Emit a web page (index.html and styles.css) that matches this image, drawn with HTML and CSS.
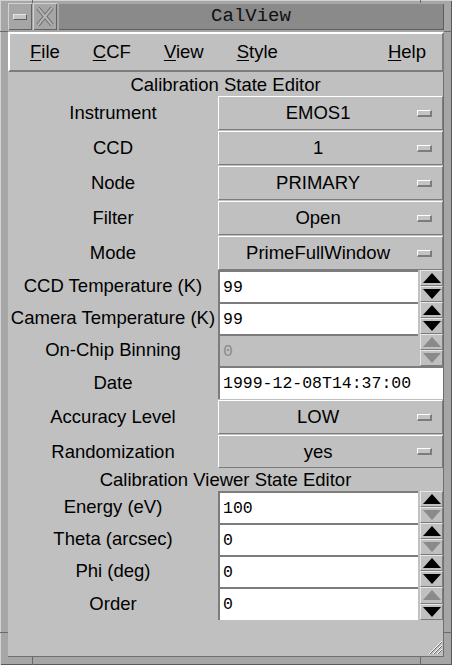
FILE: index.html
```html
<!DOCTYPE html>
<html>
<head>
<meta charset="utf-8">
<title>CalView</title>
<link rel="stylesheet" href="styles.css">
</head>
<body>
<div class="win">
  <span class="notch nt-l"></span><span class="notch nt-r"></span>
  <span class="notch nl-t"></span><span class="notch nr-t"></span>
  <span class="notch nl-b"></span><span class="notch nr-b"></span>
  <span class="notch nb-l"></span><span class="notch nb-r"></span>
  <div class="titlebar">
    <div class="tbtn"><span class="minbar"></span></div>
    <div class="tbtn">
      <svg width="24" height="27" viewBox="0 0 24 27">
        <path d="M5 5 L19 22 M19 5 L5 22" stroke="#6e6e6e" stroke-width="4" fill="none"/>
        <path d="M5 5 L19 22 M19 5 L5 22" stroke="#b4b4b4" stroke-width="2" fill="none"/>
      </svg>
    </div>
    <div class="title">CalView</div>
  </div>
  <div class="client">
    <div class="menubar">
      <span class="mi"><u>F</u>ile</span>
      <span class="mi"><u>C</u>CF</span>
      <span class="mi"><u>V</u>iew</span>
      <span class="mi"><u>S</u>tyle</span>
      <span class="mi help"><u>H</u>elp</span>
    </div>
    <div class="form">
      <div class="hdr hdr1">Calibration State Editor</div>

      <div class="row h35"><div class="lbl">Instrument</div><div class="opt"><span class="otext">EMOS1</span><span class="ind"></span></div></div>
      <div class="row h35"><div class="lbl">CCD</div><div class="opt"><span class="otext">1</span><span class="ind"></span></div></div>
      <div class="row h35"><div class="lbl">Node</div><div class="opt"><span class="otext">PRIMARY</span><span class="ind"></span></div></div>
      <div class="row h35"><div class="lbl">Filter</div><div class="opt"><span class="otext">Open</span><span class="ind"></span></div></div>
      <div class="row h34"><div class="lbl">Mode</div><div class="opt"><span class="otext">PrimeFullWindow</span><span class="ind"></span></div></div>

      <div class="row h32"><div class="lbl">CCD Temperature (K)</div><div class="field">99</div>
        <div class="spin"><span class="arr"><svg class="tri" viewBox="0 0 18 10"><path d="M0 10 L9 0 L18 10 Z"/></svg></span><span class="arr"><svg class="tri" viewBox="0 0 18 10"><path d="M0 0 L9 10 L18 0 Z"/></svg></span></div></div>
      <div class="row h32"><div class="lbl">Camera Temperature (K)</div><div class="field">99</div>
        <div class="spin"><span class="arr"><svg class="tri" viewBox="0 0 18 10"><path d="M0 10 L9 0 L18 10 Z"/></svg></span><span class="arr"><svg class="tri" viewBox="0 0 18 10"><path d="M0 0 L9 10 L18 0 Z"/></svg></span></div></div>
      <div class="row h32"><div class="lbl">On-Chip Binning</div><div class="field off">0</div>
        <div class="spin"><span class="arr off"><svg class="tri" viewBox="0 0 18 10"><path d="M0 10 L9 0 L18 10 Z"/></svg></span><span class="arr off"><svg class="tri" viewBox="0 0 18 10"><path d="M0 0 L9 10 L18 0 Z"/></svg></span></div></div>
      <div class="row h34"><div class="lbl">Date</div><div class="field wide">1999-12-08T14:37:00</div></div>

      <div class="row h35"><div class="lbl">Accuracy Level</div><div class="opt"><span class="otext">LOW</span><span class="ind"></span></div></div>
      <div class="row h33"><div class="lbl">Randomization</div><div class="opt"><span class="otext">yes</span><span class="ind"></span></div></div>

      <div class="hdr hdr2">Calibration Viewer State Editor</div>

      <div class="row h32"><div class="lbl">Energy (eV)</div><div class="field">100</div>
        <div class="spin"><span class="arr"><svg class="tri" viewBox="0 0 18 10"><path d="M0 10 L9 0 L18 10 Z"/></svg></span><span class="arr off"><svg class="tri" viewBox="0 0 18 10"><path d="M0 0 L9 10 L18 0 Z"/></svg></span></div></div>
      <div class="row h32"><div class="lbl">Theta (arcsec)</div><div class="field">0</div>
        <div class="spin"><span class="arr"><svg class="tri" viewBox="0 0 18 10"><path d="M0 10 L9 0 L18 10 Z"/></svg></span><span class="arr off"><svg class="tri" viewBox="0 0 18 10"><path d="M0 0 L9 10 L18 0 Z"/></svg></span></div></div>
      <div class="row h32"><div class="lbl">Phi (deg)</div><div class="field">0</div>
        <div class="spin"><span class="arr"><svg class="tri" viewBox="0 0 18 10"><path d="M0 10 L9 0 L18 10 Z"/></svg></span><span class="arr"><svg class="tri" viewBox="0 0 18 10"><path d="M0 0 L9 10 L18 0 Z"/></svg></span></div></div>
      <div class="row h33"><div class="lbl">Order</div><div class="field">0</div>
        <div class="spin"><span class="arr off"><svg class="tri" viewBox="0 0 18 10"><path d="M0 10 L9 0 L18 10 Z"/></svg></span><span class="arr"><svg class="tri" viewBox="0 0 18 10"><path d="M0 0 L9 10 L18 0 Z"/></svg></span></div></div>

      <div class="filler"></div>
      <svg class="grip" width="14" height="14" viewBox="0 0 14 14">
        <path d="M14 1 L1 14 M14 5 L5 14 M14 9 L9 14" stroke="#ffffff" stroke-width="1" fill="none"/>
        <path d="M14 2 L2 14 M14 6 L6 14 M14 10 L10 14" stroke="#707070" stroke-width="1" fill="none"/>
      </svg>
    </div>
  </div>
</div>
</body>
</html>
```

FILE: styles.css
```css
* { box-sizing: border-box; }
html, body { margin: 0; padding: 0; }
body {
  width: 452px;
  height: 665px;
  overflow: hidden;
  background: #a6a6a6;
  font-family: "Liberation Sans", Arial, sans-serif;
  color: #000;
}
.win {
  position: relative;
  width: 452px;
  height: 665px;
  background: #a6a6a6;
  padding: 3px 8px 8px 8px;
  display: flex;
  flex-direction: column;
  box-shadow: inset 1px 1px 0 #d2d2d2, inset -1px -1px 0 #5a5a5a;
}
.notch { position: absolute; background: #6a6a6a; }
.nt-l { left: 32px; top: 0; width: 1px; height: 3px; }
.nt-r { left: 420px; top: 0; width: 1px; height: 3px; }
.nb-l { left: 32px; bottom: 0; width: 1px; height: 8px; }
.nb-r { left: 420px; bottom: 0; width: 1px; height: 8px; }
.nl-t { left: 0; top: 31px; width: 8px; height: 1px; }
.nr-t { right: 0; top: 31px; width: 8px; height: 1px; }
.nl-b { left: 0; top: 632px; width: 8px; height: 1px; }
.nr-b { right: 0; top: 632px; width: 8px; height: 1px; }

.titlebar { height: 27px; display: flex; margin-bottom: 2px; }
.tbtn {
  width: 24px;
  height: 27px;
  margin-right: 1px;
  background: #a6a6a6;
  box-shadow: inset 1px 1px 0 #d2d2d2, inset -1px -1px 0 #626262;
  display: flex;
  align-items: center;
  justify-content: center;
}
.minbar {
  width: 14px;
  height: 6px;
  background: #c4c4c4;
  border: 1px solid;
  border-color: #e6e6e6 #5e5e5e #5e5e5e #e6e6e6;
}
.title {
  flex: 1;
  background: #8a8a8a;
  box-shadow: inset 1px 1px 0 #a8a8a8, inset -1px -1px 0 #5e5e5e;
  font-family: "Liberation Mono", "DejaVu Sans Mono", monospace;
  font-size: 19px;
  line-height: 27px;
  text-align: center;
  color: #111;
}

.client {
  flex: 1;
  display: flex;
  flex-direction: column;
  background: #c0c0c0;
}
.menubar {
  height: 40px;
  display: flex;
  align-items: center;
  gap: 33px;
  padding-left: 20px;
  padding-right: 16px;
  border-style: solid;
  border-width: 2px;
  border-color: #ffffff #7c7c7c #7c7c7c #ffffff;
  font-size: 18.5px;
}
.mi u { text-decoration: underline; text-underline-offset: 2px; }
.help { margin-left: auto; }

.form {
  position: relative;
  flex: 1;
  display: flex;
  flex-direction: column;
  border-right: 1px solid #6e6e6e;
  border-bottom: 1px solid #6e6e6e;
}
.hdr { text-align: center; font-size: 18.5px; }
.hdr1 { height: 24px; line-height: 24px; padding-top: 1px; }
.hdr2 { height: 23px; line-height: 23px; }

.row { display: flex; align-items: flex-start; }
.h32 { height: 32px; }
.h33 { height: 33px; }
.h34 { height: 34px; }
.h35 { height: 35px; }
.lbl {
  width: 210px;
  align-self: stretch;
  display: flex;
  align-items: center;
  justify-content: center;
  font-size: 18.5px;
  white-space: nowrap;
}
.h35 .lbl { padding-bottom: 1px; }

.opt {
  width: 225px;
  height: 34px;
  display: flex;
  align-items: center;
  border-style: solid;
  border-width: 1px;
  border-color: #ffffff #7c7c7c #7c7c7c #ffffff;
  font-size: 18.5px;
}
.h33 .opt { height: 33px; }
.otext { width: 200px; text-align: center; }
.ind {
  margin-left: auto;
  margin-right: 10px;
  width: 15px;
  height: 7px;
  background: #c4c4c4;
  border-style: solid;
  border-width: 1px 2px 2px 1px;
  border-color: #ffffff #7c7c7c #7c7c7c #ffffff;
}

.field {
  width: 200px;
  height: 100%;
  background: #ffffff;
  border-top: 2px solid #7c7c7c;
  border-left: 2px solid #7c7c7c;
  padding-left: 3px;
  font-family: "Liberation Mono", "DejaVu Sans Mono", monospace;
  font-size: 16.5px;
  display: flex;
  align-items: center;
}
.field.off { background: #c0c0c0; color: #8c8c8c; }
.field.wide { width: 225px; height: 33px; }

.spin {
  margin-left: 2px;
  width: 23px;
  height: 100%;
  display: flex;
  flex-direction: column;
}
.arr {
  flex: 1;
  display: flex;
  align-items: center;
  justify-content: center;
  border-style: solid;
  border-width: 1px;
  border-color: #e8e8e8 #7c7c7c #7c7c7c #e8e8e8;
  background: #c0c0c0;
}
.tri { width: 18px; height: 10px; fill: #000; display: block; }
.arr.off .tri { fill: #8a8a8a; }

.filler { flex: 1; }
.grip { position: absolute; right: 1px; bottom: 2px; }
```
